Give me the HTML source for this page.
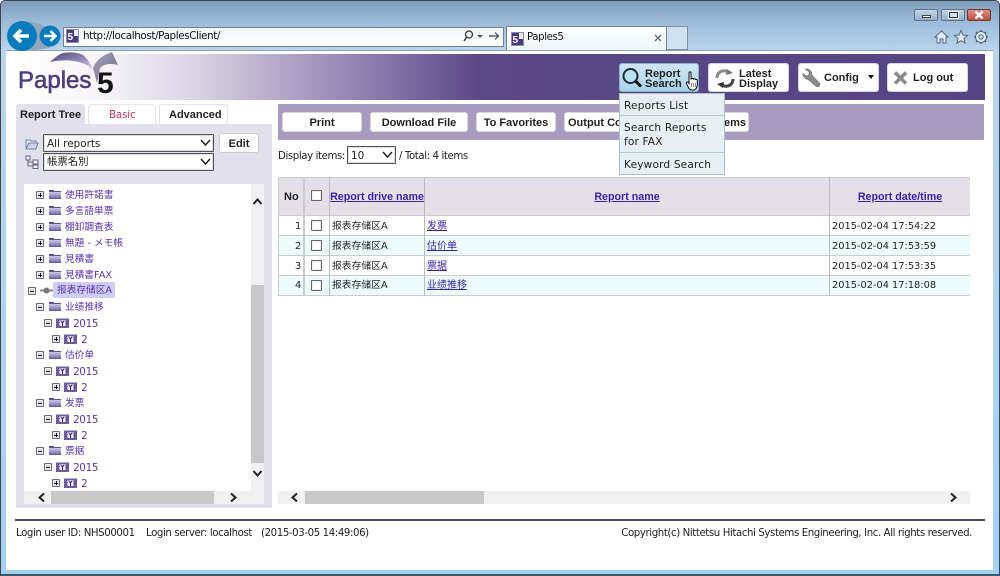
<!DOCTYPE html>
<html><head><meta charset="utf-8"><title>Paples5</title>
<style>
*{box-sizing:border-box}
html,body{margin:0;padding:0;width:1000px;height:576px;overflow:hidden;background:#fff}
body{position:relative;font-family:"DejaVu Sans","Noto Sans CJK SC",sans-serif;font-size:10.2px;color:#222}
.a{position:absolute}
.t{position:absolute;white-space:nowrap;line-height:14px;height:14px;letter-spacing:-.4px}
.bd{font-family:"Liberation Sans",sans-serif;font-weight:bold;font-size:11px;letter-spacing:0}
.b{position:absolute;background:#fff;border:1px solid #d8d4e2;border-radius:3px;font-family:"Liberation Sans",sans-serif;font-weight:bold;font-size:11px;text-align:center;color:#222;white-space:nowrap}
.tr{position:absolute;white-space:nowrap;line-height:14px;height:14px;color:#5a35ad;font-size:9.7px;margin-top:1px;font-family:"DejaVu Sans","Noto Sans CJK JP",sans-serif}
.tc{font-family:"DejaVu Sans","Noto Sans CJK SC",sans-serif}
.pm{position:absolute;width:8px;height:8px;border:1px solid #667;border-radius:1px;background:#e8e8ec}
.pm:before{content:"";position:absolute;left:1px;width:4px;height:1px;background:#111;top:2.5px}
.pm.p:after{content:"";position:absolute;left:2.5px;top:1px;width:1px;height:4px;background:#111}
.sel{position:absolute;background:#fff;border:1px solid #555;border-radius:1px;box-shadow:inset 0 0 0 1px #ddd;font-size:10.4px;color:#222}
.h{position:absolute;color:#3d22a6;text-decoration:underline;font-family:"Liberation Sans",sans-serif;font-weight:bold;font-size:10.7px;white-space:nowrap;line-height:14px;text-align:center}
.l{position:absolute;color:#3d22a6;text-decoration:underline;font-size:10px;white-space:nowrap;line-height:14px}
.c{position:absolute;white-space:nowrap;line-height:14px;font-size:9.8px;color:#222}
.cb{position:absolute;width:11px;height:11px;border:1px solid #666;border-radius:1px;background:#fff;box-shadow:inset 0 0 0 1px #eee}
.m{position:absolute;left:624px;white-space:nowrap;font-size:10.6px;line-height:14px;color:#222;letter-spacing:.15px}
.bt{position:absolute;font-family:"Liberation Sans",sans-serif;font-weight:bold;font-size:11px;line-height:9.5px;color:#222;white-space:nowrap}
</style></head>
<body>
<svg width="0" height="0" style="position:absolute">
<defs><linearGradient id="fg" x1="0" y1="0" x2="0" y2="1"><stop offset="0" stop-color="#cfcae4"/><stop offset="1" stop-color="#7467ab"/></linearGradient></defs>
<symbol id="fo" viewBox="0 0 14 10"><path d="M1 1h4.500l1 1H13v8H1z" fill="#5f4f99"/><path d="M1 3h12v6.500H1z" fill="url(#fg)"/></symbol>
<symbol id="yr" viewBox="0 0 13 10"><path d="M0 .5h13v9.500H0z" fill="#6b5a9c"/><path d="M3.500 2h6v6h-6z" fill="#f0edf8"/><path d="M4.700 2.500l1.800 2.500v3M8.300 2.500L6.500 5" stroke="#3f2f7a" stroke-width="1.100" fill="none"/></symbol>
</svg>

<!-- window chrome -->
<div class="a" style="left:0;top:0;width:1000px;height:576px;background:linear-gradient(#7f9dbb 0,#9dbcd9 22px,#b9d5ec 50px,#a5d0f0 100%);border:1px solid #3c4650;border-radius:5px 5px 0 0"></div>
<div class="a" style="left:6px;top:50px;width:987px;height:520px;background:#fff;border-top:1px solid #8ca3b8"></div>
<div class="a" style="left:1px;top:574px;width:998px;height:2px;background:#3a5a72"></div>

<!-- window controls -->
<div class="a" style="left:914px;top:9px;width:24px;height:12px;background:linear-gradient(#c4d6e6,#93b0ca);border:1px solid #5f7488;border-radius:2px"></div>
<div class="a" style="left:922px;top:15px;width:9px;height:3px;background:#fff;border:1px solid #444"></div>
<div class="a" style="left:941px;top:9px;width:24px;height:12px;background:linear-gradient(#c4d6e6,#93b0ca);border:1px solid #5f7488;border-radius:2px"></div>
<div class="a" style="left:949px;top:12px;width:9px;height:6px;background:#cfdfee;border:1px solid #333;outline:1px solid #f4f8fc"></div>
<div class="a" style="left:967px;top:9px;width:24px;height:12px;background:linear-gradient(#e09184,#bb4f40);border:1px solid #6e3b35;border-radius:2px"></div>
<svg class="a" style="left:974px;top:10px" width="10" height="10"><path d="M1.500 1.500l7 7M8.500 1.500l-7 7" stroke="#fff" stroke-width="2.400"/></svg>

<!-- nav -->
<svg class="a" style="left:6px;top:20px" width="58" height="32">
<path d="M22 2C33 2 38 6 42 8L44 28 22 31z" fill="#8fa6bd"/>
<circle cx="16" cy="16" r="15" fill="#0a7cbe"/><circle cx="44" cy="16" r="10.500" fill="#0a7cbe"/>
<path d="M23 16H9M15 10l-6 6 6 6" stroke="#fff" stroke-width="3.500" fill="none"/>
<path d="M38 16h11M44.500 11l5 5-5 5" stroke="#fff" stroke-width="2.500" fill="none"/>
</svg>

<!-- address bar -->
<div class="a" style="left:63px;top:27px;width:441px;height:20px;background:linear-gradient(#f0f5fa,#fff);border:1px solid #6f8296"></div>
<svg class="a" style="left:66px;top:29px" width="13" height="15"><rect x=".5" y=".5" width="12" height="13" fill="#4b3b80" stroke="#8d8ab0"/><rect x="8" y="1" width="4" height="6" fill="#e8e8f0"/><text x="1.500" y="11" font-size="10" font-weight="bold" fill="#fff" font-family="Liberation Sans">5</text></svg>
<div class="t" style="left:83px;top:29px;font-size:10.4px;color:#111">http://localhost/PaplesClient/</div>
<svg class="a" style="left:462px;top:29px" width="40" height="14"><circle cx="7" cy="5.500" r="3.500" fill="none" stroke="#333" stroke-width="1.300"/><path d="M4.500 8.500L2 12" stroke="#333" stroke-width="1.500"/><path d="M15 6h6l-3 3z" fill="#555"/><path d="M27 7h9M33 3.500L36.500 7 33 10.500" stroke="#444" stroke-width="1.200" fill="none"/></svg>

<!-- tab -->
<div class="a" style="left:506px;top:26px;width:161px;height:24px;background:linear-gradient(#fff,#eef5fb);border:1px solid #6f8296;border-bottom:none"></div>
<svg class="a" style="left:511px;top:32px" width="13" height="14"><rect x=".5" y=".5" width="12" height="13" fill="#4b3b80" stroke="#8d8ab0"/><rect x="8" y="1" width="4" height="6" fill="#e8e8f0"/><text x="1.500" y="11" font-size="10" font-weight="bold" fill="#fff" font-family="Liberation Sans">5</text></svg>
<div class="t" style="left:527px;top:31px;font-size:10.2px;color:#111">Paples5</div>
<svg class="a" style="left:653px;top:33px" width="10" height="10"><path d="M2 2l6 6M8 2l-6 6" stroke="#666" stroke-width="1.300"/></svg>
<div class="a" style="left:667px;top:26px;width:21px;height:24px;background:#cfe2f2;border:1px solid #7b90a4;border-left:none"></div>

<!-- right icons -->
<svg class="a" style="left:934px;top:29px" width="56" height="16" fill="#dfeaf4" stroke="#55687a" stroke-width="1">
<path d="M1 8l6.500-6L14 8h-2v6H9V10H6v4H3V8z"/>
<path d="M27 1.500l1.900 4.500 4.700.4-3.600 3.100 1.100 4.700-4.100-2.500-4.100 2.500 1.100-4.700-3.600-3.100 4.700-.4z"/>
<circle cx="47" cy="8" r="5.500"/><circle cx="47" cy="8" r="2.200" fill="#bcd6ec"/><path d="M47 1v2M47 13v2M40 8h2M52 8h2M42 3l1.500 1.500M50.500 11.500L52 13M42 13l1.500-1.500M50.500 4.500L52 3" stroke-width="1.600"/>
</svg>

<!-- header band -->
<div class="a" style="left:7px;top:54px;width:978px;height:46px;background:linear-gradient(90deg,#fff 10px,#f4f2f7 100px,#d8d3e3 190px,#a79bc0 300px,#7c6ca3 400px,#5c4987 470px,#564383 100%)"></div>

<!-- logo -->
<svg class="a" style="left:14px;top:48px" width="110" height="54">
<defs><linearGradient id="w1" x1="0" y1="0" x2="1" y2="1"><stop offset="0" stop-color="#4f4580"/><stop offset=".55" stop-color="#8f88b4"/><stop offset="1" stop-color="#d5d2e4"/></linearGradient>
<linearGradient id="w2" x1="0" y1="0" x2="1" y2="1"><stop offset="0" stop-color="#a5a1bd"/><stop offset="1" stop-color="#6d6d84"/></linearGradient></defs>
<path d="M36 14C41 9 46 6 49 5C56 4 63 4 69 7C74 11 77 17 79 22C72 14 56 10 36 14z" fill="url(#w1)"/>
<path d="M79 20C82 12 89 7 98 4L104 17C96 15 90 16 86 20C85 26 84 31 83 35z" fill="url(#w2)"/>
<text x="4" y="40" font-family="'Liberation Sans',sans-serif" font-size="24" fill="#4d3f7e" stroke="#4d3f7e" stroke-width=".6">Paples</text>
<text x="83" y="45" font-family="'Liberation Sans',sans-serif" font-size="30" font-weight="bold" fill="#111">5</text>
</svg>

<!-- header buttons -->
<div class="a" style="left:619px;top:63px;width:80px;height:29px;background:linear-gradient(#cfe6f3,#a8d3e8);border:1px solid #86b6cf;border-radius:3px"></div>
<svg class="a" style="left:621px;top:67px" width="22" height="22"><circle cx="9.500" cy="9" r="7" fill="#b9dff2" stroke="#1c2b38" stroke-width="2"/><path d="M14.500 14l5.500 5.500" stroke="#111" stroke-width="3"/></svg>
<div class="bt" style="left:645px;top:70px">Report<br>Search</div>
<svg class="a" style="left:685px;top:71px" width="14" height="20"><path d="M4 2c0-1.500 2-1.500 2 0v6l1-.5c1-.3 1.500 0 1.500.5 1-.5 1.800-.2 2 .5 1-.3 1.800.2 1.800 1v4c0 2.500-1.500 5-3 5.500H6C4.500 18.500 3 16 1.500 12.500c-.5-1.500 1-2 1.800-1l.7 1z" fill="#fff" stroke="#111" stroke-width="1"/><path d="M6.500 12v4M8.500 12v4M10.500 12v4" stroke="#555" stroke-width=".7"/></svg>

<div class="b" style="left:708px;top:63px;width:81px;height:29px"></div>
<svg class="a" style="left:714px;top:68px" width="22" height="21" fill="none"><path d="M3 10C3 5 7 2 12 3l4 2-1 0" stroke="#8a8a8a" stroke-width="3"/><path d="M13 1l6 4-7 2z" fill="#777"/><path d="M19 11c0 5-4 8-9 7l-4-2" stroke="#444" stroke-width="3"/><path d="M9 20l-6-4 7-2z" fill="#333"/></svg>
<div class="bt" style="left:739px;top:70px">Latest<br>Display</div>

<div class="b" style="left:798px;top:63px;width:81px;height:29px"></div>
<svg class="a" style="left:802px;top:67px" width="21" height="21"><path d="M3 2l4 3v3l-3 1-3-3C.5 9 2 12 6 12.500l8 7c2 1.500 5-1 3.500-3.500l-7.500-8C10 4 7 1 3 2z" fill="#8a8a8a" stroke="#666" stroke-width=".5"/></svg>
<div class="t bd" style="left:824px;top:71px">Config</div>
<svg class="a" style="left:868px;top:75px" width="7" height="5"><path d="M0 0h6L3 4z" fill="#111"/></svg>

<div class="b" style="left:887px;top:63px;width:81px;height:29px"></div>
<svg class="a" style="left:893px;top:71px" width="15" height="14"><path d="M2 1.500l11 11M13 1.500l-11 11" stroke="#8a8a8a" stroke-width="3.500"/></svg>
<div class="t bd" style="left:913px;top:71px">Log out</div>

<!-- tool bar -->
<div class="a" style="left:278px;top:104px;width:706px;height:36px;background:#a79bc0"></div>
<div class="b" style="left:282px;top:112px;width:80px;height:20px;line-height:20px">Print</div>
<div class="b" style="left:370px;top:112px;width:98px;height:20px;line-height:20px">Download File</div>
<div class="b" style="left:476px;top:112px;width:80px;height:20px;line-height:20px">To Favorites</div>
<div class="b" style="left:564px;top:112px;width:185px;height:20px;line-height:20px;text-align:left;padding-left:3px">Output Co<span style="position:absolute;left:159px">ems</span></div>

<!-- drop menu -->
<div class="a" style="left:619px;top:93px;width:106px;height:82px;background:#e8eff3;border:1px solid #a9bfc9"></div>
<div class="a" style="left:620px;top:115px;width:104px;height:1px;background:#b5c8d0"></div>
<div class="a" style="left:620px;top:152px;width:104px;height:1px;background:#b5c8d0"></div>
<div class="m" style="top:99px">Reports List</div>
<div class="m" style="top:121px">Search Reports</div>
<div class="m" style="top:135px">for FAX</div>
<div class="m" style="top:158px">Keyword Search</div>

<!-- left tabs -->
<div class="a" style="left:16px;top:104px;width:69px;height:20px;background:#e2e0ea;border-radius:3px 3px 0 0"></div>
<div class="t bd" style="left:20px;top:108px">Report Tree</div>
<div class="a" style="left:88px;top:104px;width:68px;height:20px;border:1px solid #e2e0ea;border-bottom:none;border-radius:3px 3px 0 0"></div>
<div class="t" style="left:109px;top:108px;color:#b13a5e;font-size:10.4px;letter-spacing:-.2px">Basic</div>
<div class="a" style="left:159px;top:104px;width:69px;height:20px;border:1px solid #e2e0ea;border-bottom:none;border-radius:3px 3px 0 0"></div>
<div class="t bd" style="left:169px;top:108px">Advanced</div>

<!-- left panel -->
<div class="a" style="left:16px;top:124px;width:256px;height:384px;background:#e2e0ea"></div>
<svg class="a" style="left:25px;top:137px" width="14" height="13"><path d="M1 3h4l1 1h5v2H4l-3 6z" fill="#e8ecf8" stroke="#7680a5"/><path d="M1 12l3-6h9l-2 6z" fill="#c9d2ea" stroke="#7680a5"/></svg>
<svg class="a" style="left:25px;top:155px" width="14" height="14" fill="#eef" stroke="#667"><rect x="1" y="1" width="4" height="4"/><rect x="8" y="5" width="5" height="4"/><rect x="8" y="10" width="5" height="3.500"/><path d="M3 5v6h5M3 7h5" fill="none"/></svg>
<div class="sel" style="left:43px;top:134px;width:171px;height:18px;padding:2px 3px;line-height:14px">All reports<svg class="a" style="left:156px;top:4px" width="11" height="8"><path d="M1 1l4.500 5L10 1" fill="none" stroke="#222" stroke-width="1.500"/></svg></div>
<div class="sel" style="left:43px;top:153px;width:171px;height:18px;padding:1px 3px;line-height:14px;font-family:'DejaVu Sans','Noto Sans CJK JP',sans-serif">帳票名別<svg class="a" style="left:156px;top:4px" width="11" height="8"><path d="M1 1l4.500 5L10 1" fill="none" stroke="#222" stroke-width="1.500"/></svg></div>
<div class="b" style="left:219px;top:133px;width:40px;height:20px;line-height:20px;border-color:#ccc">Edit</div>

<!-- tree -->
<div class="a" style="left:24px;top:184px;width:240px;height:307px;background:#fff"></div>
<div class="a" style="left:251px;top:184px;width:13px;height:307px;background:#f0f0f0"></div>
<div class="a" style="left:251px;top:285px;width:13px;height:178px;background:#c8c8c8"></div>
<svg class="a" style="left:251px;top:196px" width="13" height="12"><path d="M2.500 8L6.500 3.500 10.500 8" fill="none" stroke="#222" stroke-width="2"/></svg>
<svg class="a" style="left:251px;top:468px" width="13" height="12"><path d="M2.500 3L6.500 7.500 10.500 3" fill="none" stroke="#222" stroke-width="2"/></svg>
<div class="a" style="left:24px;top:491px;width:240px;height:13px;background:#f0f0f0"></div>
<div class="a" style="left:51px;top:491px;width:163px;height:13px;background:#c8c8c8"></div>
<svg class="a" style="left:36px;top:491px" width="12" height="13"><path d="M8 2.500L3.500 6.500 8 10.500" fill="none" stroke="#222" stroke-width="2"/></svg>
<svg class="a" style="left:227px;top:491px" width="12" height="13"><path d="M4 2.500L8.500 6.500 4 10.500" fill="none" stroke="#222" stroke-width="2"/></svg>

<i class="pm p" style="left:36px;top:191px"></i><svg class="a" style="left:48px;top:189px" width="14" height="10"><use href="#fo"/></svg><div class="tr" style="left:65px;top:188px">使用許諾書</div>
<i class="pm p" style="left:36px;top:207px"></i><svg class="a" style="left:48px;top:205px" width="14" height="10"><use href="#fo"/></svg><div class="tr" style="left:65px;top:204px">多言語単票</div>
<i class="pm p" style="left:36px;top:223px"></i><svg class="a" style="left:48px;top:221px" width="14" height="10"><use href="#fo"/></svg><div class="tr" style="left:65px;top:220px">棚卸調査表</div>
<i class="pm p" style="left:36px;top:239px"></i><svg class="a" style="left:48px;top:237px" width="14" height="10"><use href="#fo"/></svg><div class="tr" style="left:65px;top:236px">無題 - メモ帳</div>
<i class="pm p" style="left:36px;top:255px"></i><svg class="a" style="left:48px;top:253px" width="14" height="10"><use href="#fo"/></svg><div class="tr" style="left:65px;top:252px">見積書</div>
<i class="pm p" style="left:36px;top:271px"></i><svg class="a" style="left:48px;top:269px" width="14" height="10"><use href="#fo"/></svg><div class="tr" style="left:65px;top:268px">見積書FAX</div>

<i class="pm" style="left:28px;top:287px"></i>
<svg class="a" style="left:40px;top:286px" width="13" height="9"><path d="M0 4.500h4M9 4.500h4" stroke="#888" stroke-width="2"/><circle cx="6.500" cy="4.500" r="3" fill="#777"/></svg>
<div class="a" style="left:53px;top:282px;width:62px;height:16px;background:#cfcdf6"></div>
<div class="tr tc" style="left:57px;top:283px">报表存储区A</div>

<i class="pm" style="left:36px;top:303px"></i><svg class="a" style="left:48px;top:301px" width="14" height="10"><use href="#fo"/></svg><div class="tr tc" style="left:65px;top:300px">业绩推移</div>
<i class="pm" style="left:44px;top:319px"></i><svg class="a" style="left:56px;top:318px" width="13" height="10"><use href="#yr"/></svg><div class="tr" style="left:73px;top:316px;font-size:10.4px;letter-spacing:-.3px">2015</div>
<i class="pm p" style="left:52px;top:335px"></i><svg class="a" style="left:64px;top:334px" width="13" height="10"><use href="#yr"/></svg><div class="tr" style="left:81px;top:332px;font-size:10.4px">2</div>

<i class="pm" style="left:36px;top:351px"></i><svg class="a" style="left:48px;top:349px" width="14" height="10"><use href="#fo"/></svg><div class="tr tc" style="left:65px;top:348px">估价单</div>
<i class="pm" style="left:44px;top:367px"></i><svg class="a" style="left:56px;top:366px" width="13" height="10"><use href="#yr"/></svg><div class="tr" style="left:73px;top:364px;font-size:10.4px;letter-spacing:-.3px">2015</div>
<i class="pm p" style="left:52px;top:383px"></i><svg class="a" style="left:64px;top:382px" width="13" height="10"><use href="#yr"/></svg><div class="tr" style="left:81px;top:380px;font-size:10.4px">2</div>

<i class="pm" style="left:36px;top:399px"></i><svg class="a" style="left:48px;top:397px" width="14" height="10"><use href="#fo"/></svg><div class="tr tc" style="left:65px;top:396px">发票</div>
<i class="pm" style="left:44px;top:415px"></i><svg class="a" style="left:56px;top:414px" width="13" height="10"><use href="#yr"/></svg><div class="tr" style="left:73px;top:412px;font-size:10.4px;letter-spacing:-.3px">2015</div>
<i class="pm p" style="left:52px;top:431px"></i><svg class="a" style="left:64px;top:430px" width="13" height="10"><use href="#yr"/></svg><div class="tr" style="left:81px;top:428px;font-size:10.4px">2</div>

<i class="pm" style="left:36px;top:447px"></i><svg class="a" style="left:48px;top:445px" width="14" height="10"><use href="#fo"/></svg><div class="tr tc" style="left:65px;top:444px">票据</div>
<i class="pm" style="left:44px;top:463px"></i><svg class="a" style="left:56px;top:462px" width="13" height="10"><use href="#yr"/></svg><div class="tr" style="left:73px;top:460px;font-size:10.4px;letter-spacing:-.3px">2015</div>
<i class="pm p" style="left:52px;top:479px"></i><svg class="a" style="left:64px;top:478px" width="13" height="10"><use href="#yr"/></svg><div class="tr" style="left:81px;top:476px;font-size:10.4px">2</div>

<!-- display items -->
<div class="t" style="left:278px;top:150px">Display items:</div>
<div class="sel" style="left:347px;top:146px;width:49px;height:18px;padding:2px 3px;line-height:14px">10<svg class="a" style="left:34px;top:4px" width="11" height="8"><path d="M1 1l4.500 5L10 1" fill="none" stroke="#222" stroke-width="1.500"/></svg></div>
<div class="t" style="left:399px;top:150px">/ Total: 4 items</div>

<!-- table -->
<div class="a" style="left:278px;top:177px;width:692px;height:39px;background:#e3e0ea;border-top:1px solid #ccc;border-bottom:1px solid #ccc"></div>
<div class="a" style="left:278px;top:216px;width:692px;height:20px;background:#fff;border-bottom:1px solid #ccc"></div>
<div class="a" style="left:278px;top:236px;width:692px;height:20px;background:#ecfcfc;border-bottom:1px solid #ccc"></div>
<div class="a" style="left:278px;top:256px;width:692px;height:20px;background:#fff;border-bottom:1px solid #ccc"></div>
<div class="a" style="left:278px;top:276px;width:692px;height:20px;background:#ecfcfc;border-bottom:1px solid #ccc"></div>
<div class="a" style="left:278px;top:177px;width:1px;height:119px;background:#ccc"></div>
<div class="a" style="left:303px;top:177px;width:2px;height:119px;background:#ccc"></div>
<div class="a" style="left:329px;top:177px;width:1px;height:119px;background:#bbb"></div>
<div class="a" style="left:424px;top:177px;width:1px;height:119px;background:#bbb"></div>
<div class="a" style="left:829px;top:177px;width:1px;height:119px;background:#bbb"></div>

<div class="t bd" style="left:284px;top:190px">No</div>
<div class="cb" style="left:311px;top:190px"></div>
<div class="h" style="left:330px;top:190px;width:94px">Report drive name</div>
<div class="h" style="left:425px;top:190px;width:404px">Report name</div>
<div class="h" style="left:830px;top:190px;width:140px">Report date/time</div>

<div class="c" style="left:295px;top:220px">1</div><div class="cb" style="left:311px;top:220px"></div><div class="c" style="left:332px;top:220px">报表存储区A</div><div class="l" style="left:427px;top:220px">发票</div><div class="c" style="left:832px;top:220px">2015-02-04 17:54:22</div>
<div class="c" style="left:295px;top:240px">2</div><div class="cb" style="left:311px;top:240px"></div><div class="c" style="left:332px;top:240px">报表存储区A</div><div class="l" style="left:427px;top:240px">估价单</div><div class="c" style="left:832px;top:240px">2015-02-04 17:53:59</div>
<div class="c" style="left:295px;top:260px">3</div><div class="cb" style="left:311px;top:260px"></div><div class="c" style="left:332px;top:260px">报表存储区A</div><div class="l" style="left:427px;top:260px">票据</div><div class="c" style="left:832px;top:260px">2015-02-04 17:53:35</div>
<div class="c" style="left:295px;top:279px">4</div><div class="cb" style="left:311px;top:280px"></div><div class="c" style="left:332px;top:279px">报表存储区A</div><div class="l" style="left:427px;top:279px">业绩推移</div><div class="c" style="left:832px;top:279px">2015-02-04 17:18:08</div>

<!-- right h-scroll -->
<div class="a" style="left:278px;top:491px;width:692px;height:13px;background:#f0f0f0"></div>
<div class="a" style="left:305px;top:491px;width:179px;height:13px;background:#c8c8c8"></div>
<svg class="a" style="left:289px;top:491px" width="12" height="13"><path d="M8 2.500L3.500 6.500 8 10.500" fill="none" stroke="#222" stroke-width="2"/></svg>
<svg class="a" style="left:947px;top:491px" width="12" height="13"><path d="M4 2.500L8.500 6.500 4 10.500" fill="none" stroke="#222" stroke-width="2"/></svg>

<!-- footer -->
<div class="a" style="left:15px;top:519px;width:970px;height:2px;background:#4d3f7e"></div>
<div class="t" style="left:16px;top:527px">Login user ID: NHS00001</div>
<div class="t" style="left:146px;top:527px">Login server: localhost</div>
<div class="t" style="left:261px;top:527px">(2015-03-05 14:49:06)</div>
<div class="t" style="right:28px;top:527px">Copyright(c) Nittetsu Hitachi Systems Engineering, Inc. All rights reserved.</div>
</body></html>
